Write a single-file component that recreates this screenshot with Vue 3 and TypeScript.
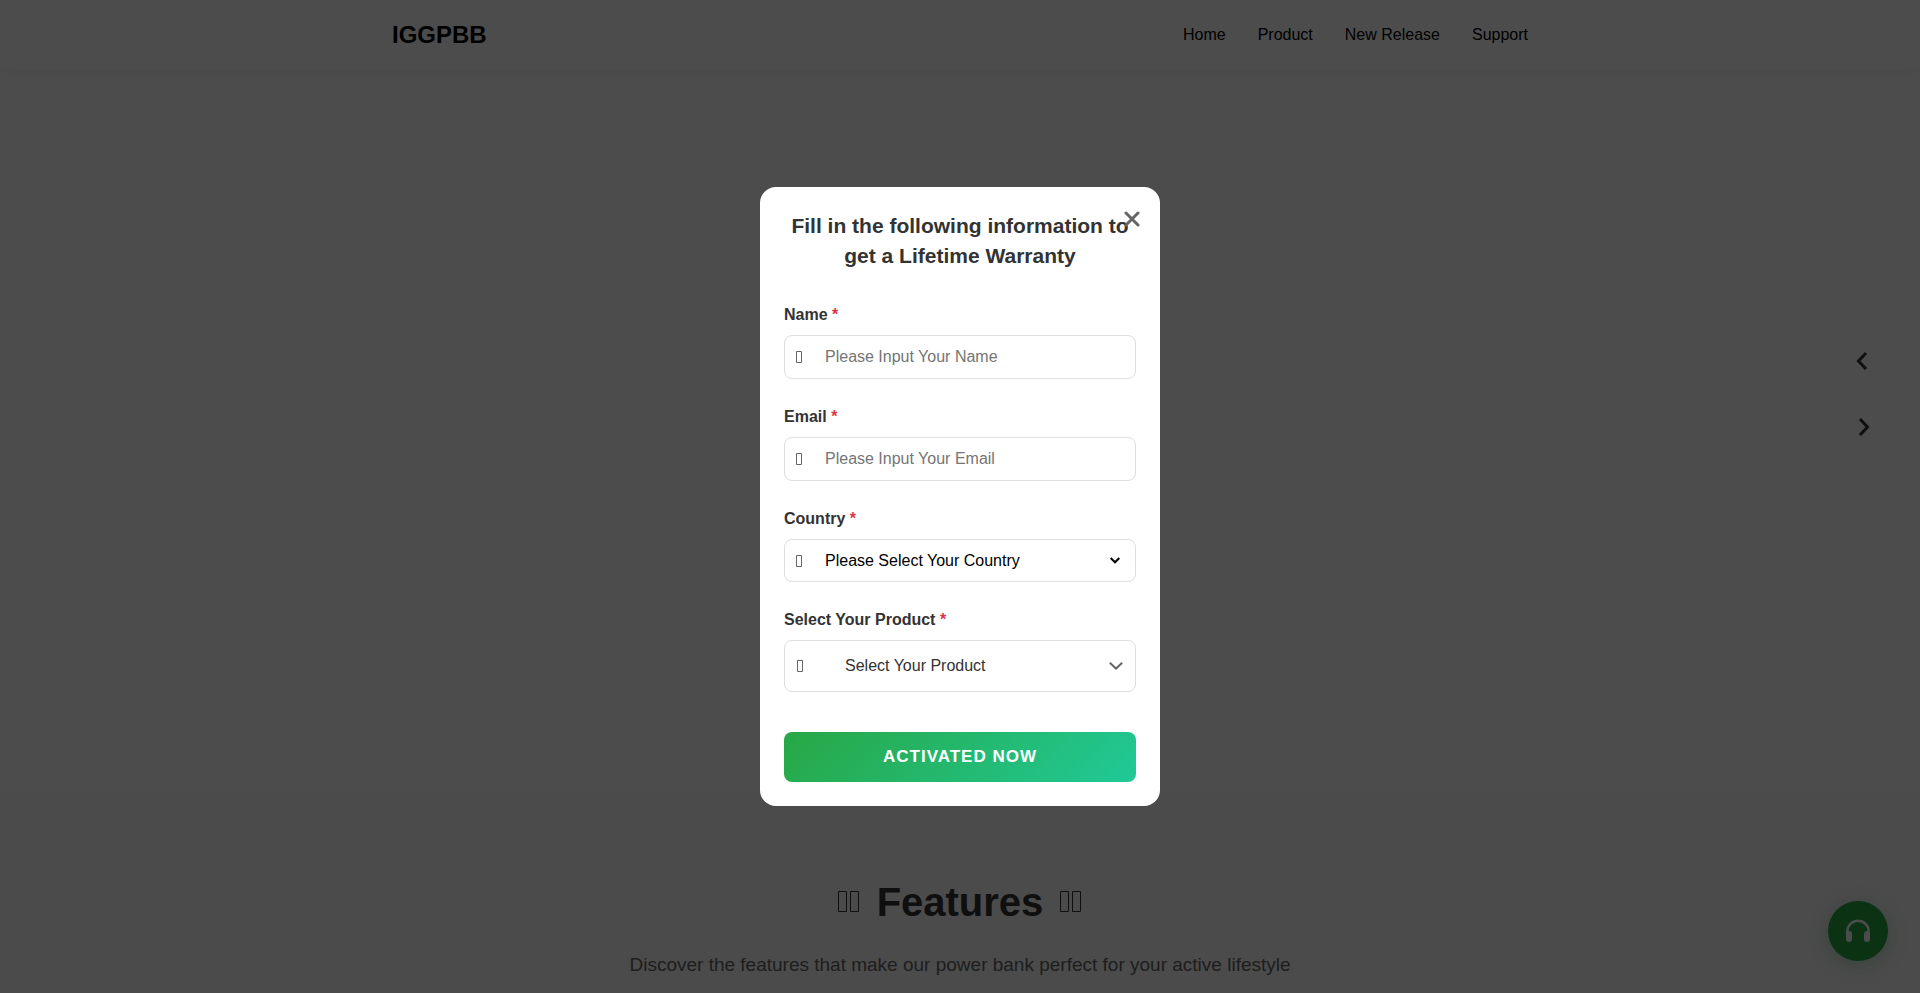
<script setup lang="ts">
import { ref } from 'vue'

interface TextField {
  id: string
  label: string
  type: string
  placeholder: string
}

const links: string[] = ['Home', 'Product', 'New Release', 'Support']

const fields: TextField[] = [
  { id: 'name', label: 'Name', type: 'text', placeholder: 'Please Input Your Name' },
  { id: 'email', label: 'Email', type: 'email', placeholder: 'Please Input Your Email' },
]

const values = ref<Record<string, string>>({ name: '', email: '' })
const country = ref('')
</script>

<template>
  <div class="page">
    <header class="header">
      <div class="header-inner">
        <a class="logo" href="#">IGGPBB</a>
        <nav class="nav">
          <a v-for="link in links" :key="link" href="#">{{ link }}</a>
        </nav>
      </div>
    </header>

    <section class="hero">
      <div class="arrows">
        <button type="button" class="arrow" aria-label="Previous slide">
          <svg width="20" height="20" viewBox="0 0 20 20"><path d="M13 2 L5.500 10 L13 18" /></svg>
        </button>
        <button type="button" class="arrow" aria-label="Next slide">
          <svg width="20" height="20" viewBox="0 0 20 20"><path d="M7 2 L14.500 10 L7 18" /></svg>
        </button>
      </div>
    </section>

    <section class="features">
      <h2>
        <svg class="boxes" width="24" height="24" viewBox="0 0 24 24"><path d="M1.500 1.500h8v20h-8zM13.500 1.500h8v20h-8z" /></svg>
        <span>Features</span>
        <svg class="boxes" width="24" height="24" viewBox="0 0 24 24"><path d="M1.500 1.500h8v20h-8zM13.500 1.500h8v20h-8z" /></svg>
      </h2>
      <p>Discover the features that make our power bank perfect for your active lifestyle</p>
    </section>

    <button type="button" class="support" aria-label="Customer support">
      <svg width="24" height="24" viewBox="0 0 24 24">
        <path d="M1.300 15v-2.500a10.700 10.700 0 0 1 21.400 0V15" fill="none" stroke="#fff" stroke-width="2.400" />
        <rect x="0" y="12" width="6" height="11" rx="3" fill="#fff" />
        <rect x="18" y="12" width="6" height="11" rx="3" fill="#fff" />
      </svg>
    </button>
  </div>

  <div class="overlay">
    <form class="modal" role="dialog" aria-labelledby="modal-title" @submit.prevent>
      <button type="button" class="close" aria-label="Close">
        <svg width="16" height="16" viewBox="0 0 16 16"><path d="M2 2L14 14M14 2L2 14" /></svg>
      </button>
      <h3 id="modal-title">Fill in the following information to get a Lifetime Warranty</h3>

      <div v-for="field in fields" :key="field.id" class="group">
        <label :for="field.id">{{ field.label }} <span class="required">*</span></label>
        <div class="control">
          <svg class="icon" width="6" height="12" viewBox="0 0 6 12"><path d="M.500 .500h5v11h-5z" /></svg>
          <input :id="field.id" v-model="values[field.id]" :type="field.type" :placeholder="field.placeholder" />
        </div>
      </div>

      <div class="group">
        <label for="country">Country <span class="required">*</span></label>
        <div class="control">
          <svg class="icon" width="6" height="12" viewBox="0 0 6 12"><path d="M.500 .500h5v11h-5z" /></svg>
          <select id="country" v-model="country">
            <option value="">Please Select Your Country</option>
          </select>
          <svg class="caret" width="10" height="7" viewBox="0 0 10 7"><path d="M.700 1L5 5.300L9.300 1" /></svg>
        </div>
      </div>

      <div class="group">
        <label for="product">Select Your Product <span class="required">*</span></label>
        <div class="control product">
          <svg class="icon" width="6" height="12" viewBox="0 0 6 12"><path d="M.500 .500h5v11h-5z" /></svg>
          <button id="product" type="button" class="picker" aria-haspopup="listbox">Select Your Product</button>
          <svg class="caret" width="14" height="8" viewBox="0 0 14 8"><path d="M.800 .800L7 6.600L13.200 .800" /></svg>
        </div>
      </div>

      <button type="submit" class="submit">ACTIVATED NOW</button>
    </form>
  </div>
</template>

<style>
body {
  margin: 0;
  font-family: "Liberation Sans", Arial, sans-serif;
  background: #fff;
}
</style>

<style scoped>
* {
  box-sizing: border-box;
}

button,
input,
select {
  font-family: inherit;
  font-size: 16px;
}

.page {
  display: flex;
  flex-direction: column;
  min-height: 100vh;
  color: #333;
}

.header {
  position: relative;
  background: #fff;
  box-shadow: 0 2px 10px rgba(0, 0, 0, 0.05);
}

.header-inner {
  display: flex;
  align-items: center;
  justify-content: space-between;
  max-width: 1200px;
  height: 69px;
  margin: 0 auto;
  padding: 0 32px;
}

.logo,
.nav a {
  color: #000;
  text-decoration: none;
}

.logo {
  font-size: 24px;
  font-weight: 700;
}

.nav {
  display: flex;
  gap: 32px;
}

.hero {
  position: relative;
  flex: 1;
}

.arrows {
  position: absolute;
  top: 45%;
  right: 32px;
  display: flex;
  flex-direction: column;
  gap: 16px;
  transform: translateY(-50%);
}

.arrow {
  display: grid;
  place-items: center;
  width: 50px;
  height: 50px;
  padding: 0;
  border: 0;
  background: none;
}

.arrow path {
  fill: none;
  stroke: #333;
  stroke-width: 3;
}

.features {
  padding: 80px 32px 13px;
  background: #fafafa;
  text-align: center;
}

.features h2 {
  display: flex;
  align-items: center;
  justify-content: center;
  gap: 16px;
  margin: 0 0 18px;
  font-size: 40px;
  line-height: 60px;
}

.boxes path {
  fill: none;
  stroke: #333;
}

.features p {
  margin: 0;
  color: #666;
  font-size: 19px;
  line-height: 30px;
}

.support {
  position: fixed;
  right: 32px;
  bottom: 32px;
  display: grid;
  place-items: center;
  width: 60px;
  height: 60px;
  padding: 0;
  border: 0;
  border-radius: 50%;
  background: #28a745;
  box-shadow: 0 4px 20px rgba(40, 167, 69, 0.3);
}

.overlay {
  position: fixed;
  inset: 0;
  display: flex;
  align-items: center;
  justify-content: center;
  background: rgba(0, 0, 0, 0.7);
}

.modal {
  position: relative;
  width: 400px;
  max-width: 90%;
  padding: 24px;
  border-radius: 16px;
  background: #fff;
  color: #333;
}

.close {
  position: absolute;
  top: 16px;
  right: 12px;
  display: grid;
  place-items: center;
  width: 32px;
  height: 32px;
  padding: 0;
  border: 0;
  background: none;
}

.close path {
  fill: none;
  stroke: #666;
  stroke-width: 3;
  stroke-linecap: round;
}

.modal h3 {
  margin: 0 0 32px;
  font-size: 21px;
  line-height: 30px;
  text-align: center;
}

.group {
  margin-bottom: 26px;
}

label {
  display: block;
  margin-bottom: 8px;
  font-weight: 700;
  line-height: 24px;
}

.required {
  color: #dc3545;
}

.control {
  position: relative;
  display: flex;
  align-items: center;
}

.icon {
  position: absolute;
  top: 16px;
  left: 12px;
}

.icon path {
  fill: none;
  stroke: #666;
}

.caret {
  position: absolute;
  right: 16px;
  pointer-events: none;
}

.caret path {
  fill: none;
  stroke: #000;
  stroke-width: 2;
}

.product .icon {
  top: 20px;
  left: 13px;
}

.product .caret {
  right: 13px;
}

.product .caret path {
  stroke: #666;
}

.control input,
.control select,
.picker {
  width: 100%;
  height: 44px;
  padding: 0 40px;
  border: 1px solid #ddd;
  border-radius: 8px;
  background: #fff;
  appearance: none;
}

.control select {
  height: 43px;
  color: #000;
}

.control input::placeholder {
  color: #757575;
}

.control .picker {
  height: 52px;
  padding: 0 60px;
  color: #333;
  text-align: left;
}

.submit {
  display: block;
  width: 100%;
  height: 50px;
  margin-top: 40px;
  border: 0;
  border-radius: 8px;
  background: linear-gradient(135deg, #28a745, #20c997);
  color: #fff;
  font-size: 17px;
  font-weight: 700;
  letter-spacing: 1px;
}
</style>
